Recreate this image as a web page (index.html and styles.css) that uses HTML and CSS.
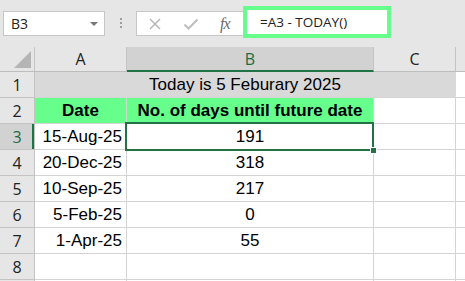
FILE: index.html
```html
<!DOCTYPE html>
<html lang="en">
<head>
  <meta charset="UTF-8" />
  <title>Days until future date</title>
  <link rel="stylesheet" href="styles.css">
</head>
<body>

<!-- Formula bar -->
<div class="formula-bar">
  <div class="name-box">
    <span>B3</span>
    <span class="caret"></span>
  </div>
  <div class="grip"><i></i><i></i><i></i></div>
  <div class="fx-buttons">
    <svg width="14" height="14" viewBox="0 0 14 14"><path d="M2 2 L12 12 M12 2 L2 12" stroke="#b3b3b3" stroke-width="1.4" fill="none"/></svg>
    <svg width="16" height="14" viewBox="0 0 16 14"><path d="M1.5 7.5 L5.5 11.5 L14.5 2.5" stroke="#bdbdbd" stroke-width="2" fill="none"/></svg>
    <span class="fx">fx</span>
  </div>
  <div class="formula-input">=A3 - TODAY()</div>
</div>

<!-- Sheet -->
<div class="sheet">
  <div class="corner"><span class="tri"></span></div>
  <div class="col-head">A</div>
  <div class="col-head active">B</div>
  <div class="col-head">C</div>
  <div class="col-head stub"></div>

  <div class="row-head">1</div>
  <div class="cell title">Today is 5 Feburary 2025</div>
  <div class="cell stub"></div>

  <div class="row-head">2</div>
  <div class="cell head">Date</div>
  <div class="cell head">No. of days until future date</div>
  <div class="cell"></div>
  <div class="cell stub"></div>

  <div class="row-head active">3</div>
  <div class="cell date">15-Aug-25</div>
  <div class="cell num selected">191</div>
  <div class="cell"></div>
  <div class="cell stub"></div>

  <div class="row-head">4</div>
  <div class="cell date">20-Dec-25</div>
  <div class="cell num">318</div>
  <div class="cell"></div>
  <div class="cell stub"></div>

  <div class="row-head">5</div>
  <div class="cell date">10-Sep-25</div>
  <div class="cell num">217</div>
  <div class="cell"></div>
  <div class="cell stub"></div>

  <div class="row-head">6</div>
  <div class="cell date">5-Feb-25</div>
  <div class="cell num">0</div>
  <div class="cell"></div>
  <div class="cell stub"></div>

  <div class="row-head">7</div>
  <div class="cell date">1-Apr-25</div>
  <div class="cell num">55</div>
  <div class="cell"></div>
  <div class="cell stub"></div>

  <div class="row-head">8</div>
  <div class="cell"></div>
  <div class="cell"></div>
  <div class="cell"></div>
  <div class="cell stub"></div>

  <!-- top sliver of row 9 -->
  <div class="row-head"></div>
  <div class="cell"></div>
  <div class="cell"></div>
  <div class="cell"></div>
  <div class="cell stub"></div>
</div>

</body>
</html>
```

FILE: styles.css
```css
html, body { margin: 0; overflow: hidden; }
body { background: #e6e6e6; font-family: "Liberation Sans", Arial, sans-serif; color: #000; }

/* formula bar */
.formula-bar {
  display: flex; align-items: flex-start;
  height: 47px; padding-left: 3px; box-sizing: border-box;
}
.name-box {
  margin-top: 11px; width: 102px; height: 25px; box-sizing: border-box;
  background: #fff; border: 1px solid #c6c6c6;
  display: flex; align-items: center; justify-content: space-between;
  padding: 0 6px 0 7px;
  font-family: "Open Sans", sans-serif; font-size: 14px; color: #222;
}
.caret {
  width: 0; height: 0;
  border-left: 4px solid transparent; border-right: 4px solid transparent;
  border-top: 4px solid #777;
}
.grip {
  width: 31px; height: 47px;
  display: flex; flex-direction: column; align-items: center;
  padding-top: 18px; box-sizing: border-box; gap: 2px;
}
.grip i { display: block; width: 2px; height: 2px; background: #9d9d9d; }
.fx-buttons {
  margin-top: 11px; width: 107px; height: 25px; box-sizing: border-box;
  background: #fff; border: 1px solid #c6c6c6; border-right: none;
  display: flex; align-items: center; gap: 21px; padding-left: 11px;
}
.fx {
  font-family: "Liberation Serif", serif; font-style: italic;
  font-size: 16px; color: #6a6a6a; letter-spacing: -1px;
}
.formula-input {
  margin-top: 6px; width: 148px; height: 32px; box-sizing: border-box;
  background: #fff; border: 4px solid #66ff8c;
  padding-left: 13px; display: flex; align-items: center;
  font-family: "Open Sans", sans-serif; font-size: 13.5px; color: #222;
}

/* grid */
.sheet {
  display: grid;
  grid-template-columns: 35px 92px 247px 82px 9px;
  grid-template-rows: 25px repeat(8, 26px) 2px;
}
.corner, .col-head, .row-head {
  background: #e6e6e6; box-sizing: border-box;
  font-family: "Open Sans", sans-serif; font-size: 16px; color: #222;
  display: flex; align-items: center; justify-content: center;
}
.corner { border-right: 1px solid #c4c4c4; border-bottom: 1px solid #bdbdbd; position: relative; }
.tri {
  position: absolute; right: 3px; bottom: 3px;
  width: 0; height: 0;
  border-left: 17px solid transparent; border-bottom: 17px solid #b5b5b5;
}
.col-head { border-right: 1px solid #c4c4c4; border-bottom: 1px solid #bdbdbd; }
.col-head.stub { border-right: none; }
.col-head.active {
  background: #d2d2d2; color: #1e6b41;
  border-bottom: 2px solid #217346;
}
.row-head { border-right: 1px solid #c4c4c4; border-bottom: 1px solid #c4c4c4; }
.row-head.active {
  background: #d2d2d2; color: #1e6b41;
  box-shadow: inset -2px 0 #217346;
}

.cell {
  background: #fff; box-sizing: border-box;
  border-right: 1px solid #d4d4d4; border-bottom: 1px solid #d4d4d4;
  font-size: 17px; display: flex; align-items: center;
  white-space: nowrap;
}
.cell.stub { border-right: none; }
.cell.title {
  grid-column: span 3; background: #d9d9d9;
  justify-content: center; border-right-color: #d9d9d9;
}
.cell.head { background: #66ff8c; font-weight: bold; justify-content: center; }
.cell.date { justify-content: flex-end; padding-right: 4px; }
.cell.num { justify-content: center; }

/* active cell outline + fill handle */
.cell.selected { position: relative; }
.cell.selected::after {
  content: ""; position: absolute;
  left: -2px; top: -2px; right: -1px; bottom: -2px;
  border: 2px solid #217346;
}
.cell.selected::before {
  content: ""; position: absolute; z-index: 1;
  right: -4px; bottom: -5px; width: 5px; height: 5px;
  background: #217346; border: 1px solid #fff;
}
```
